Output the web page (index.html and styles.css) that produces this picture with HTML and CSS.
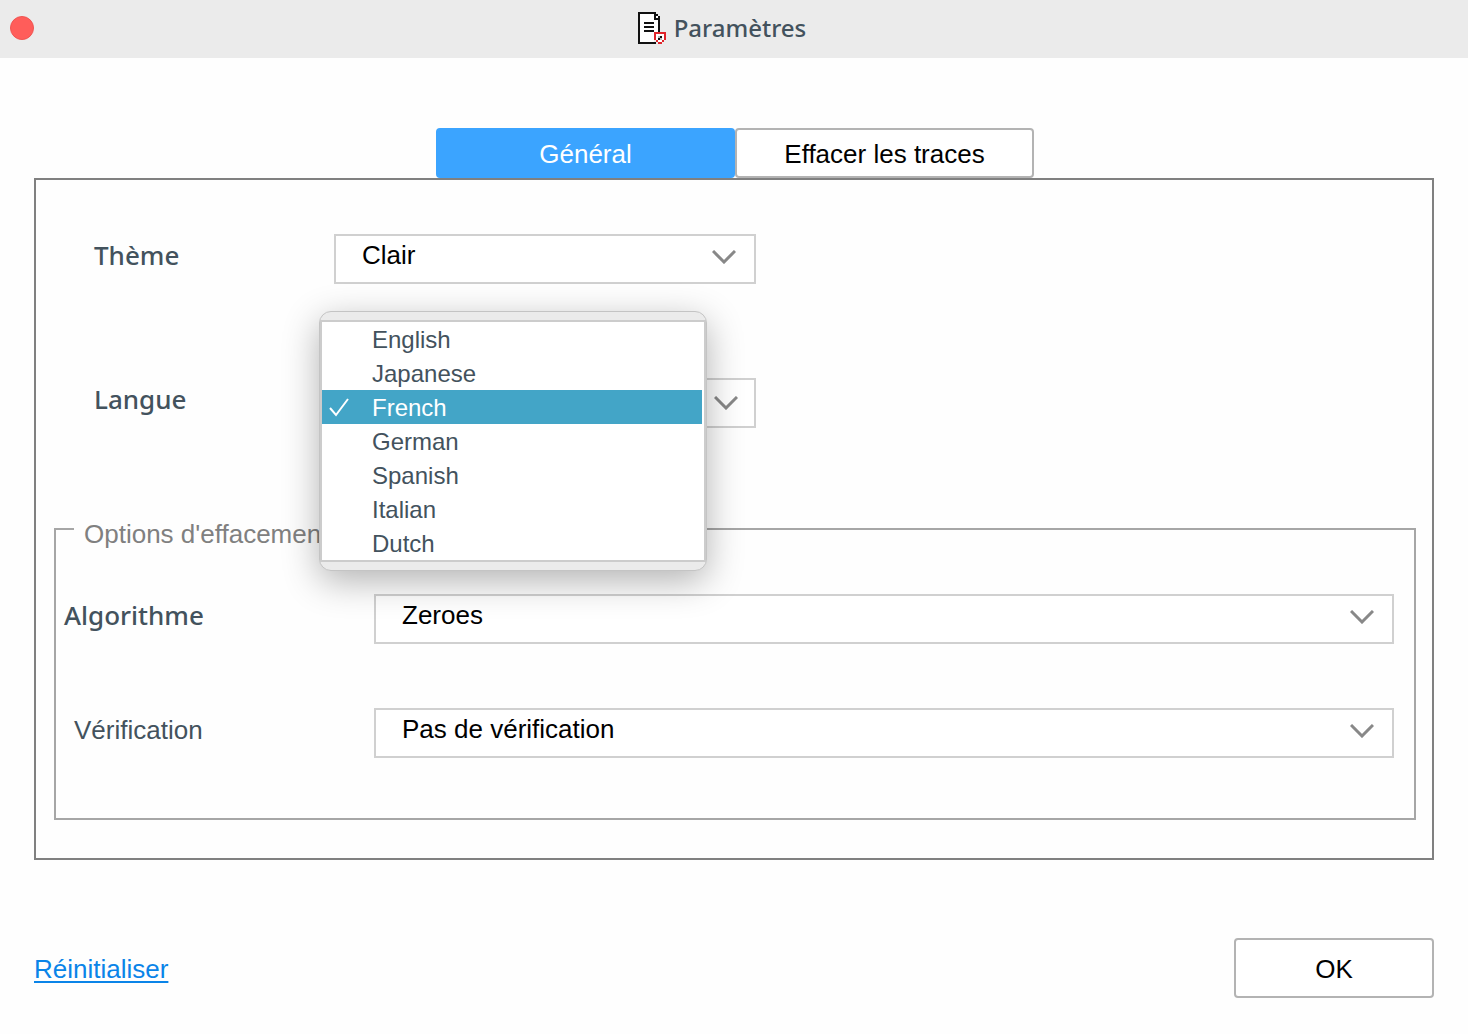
FILE: index.html
```html
<!DOCTYPE html>
<html lang="fr">
<head>
<meta charset="utf-8">
<meta name="viewport" content="width=device-width, initial-scale=1">
<title>Paramètres</title>
<link rel="stylesheet" href="styles.css">
</head>
<body>
<svg class="sprite" aria-hidden="true">
  <symbol id="chevron" viewBox="0 0 24 14">
    <path d="M1 1 12 12 23 1" fill="none" stroke="#888" stroke-width="3"/>
  </symbol>
</svg>
<header class="titlebar">
  <button class="close" type="button" aria-label="Fermer"></button>
  <h1 class="title">
    <svg class="doc-icon" viewBox="0 0 14 16" shape-rendering="crispEdges" aria-hidden="true">
      <path fill="#fff" d="M1 1h7v3h2v6H8v5H1z"/>
      <path fill="#111" d="M0 0h9v1H1v14h8v1H0zM8 1h2v1H9v1h2v7h-1V4H8zM10 2h1v1h-1zM3 5h5v1H3zM3 7h5v1H3zM3 9h5v1H3z"/>
      <path fill="#fff" d="M9 1h1v2H9zM9 11h4v3h-1v1h-2v-1H9z"/>
      <path fill="#111" d="M9 1h1v1H9z"/>
      <path fill="#e0242a" d="M8 10h6v1H8zM8 11h1v3H8zM13 11h1v3h-1zM9 14h1v1H9zM12 14h1v1h-1zM10 15h2v1h-2z"/>
      <path fill="#bbb" d="M10 12h1v1h-1zM11 13h1v1h-1z"/>
      <path fill="#111" d="M11 12h1v1h-1zM10 13h1v1h-1z"/>
    </svg>
    Paramètres
  </h1>
</header>
<main class="content">
  <div class="tabs" role="tablist">
    <button class="tab tab-active" type="button" role="tab" aria-selected="true">Général</button>
    <button class="tab" type="button" role="tab" aria-selected="false">Effacer les traces</button>
  </div>
  <section class="panel" role="tabpanel" aria-label="Général">
    <div class="row">
      <label class="label" for="theme">Thème</label>
      <div class="combo">
        <select id="theme"><option>Clair</option></select>
        <svg class="chevron" aria-hidden="true"><use href="#chevron"/></svg>
      </div>
    </div>
    <div class="row">
      <label class="label" for="language">Langue</label>
      <div class="combo">
        <select id="language"><option>French</option></select>
        <svg class="chevron chevron-open" aria-hidden="true"><use href="#chevron"/></svg>
        <div class="popup">
          <ul class="options" role="listbox" aria-label="Langue">
            <li class="option" role="option">English</li>
            <li class="option" role="option">Japanese</li>
            <li class="option option-selected" role="option" aria-selected="true">
              <svg class="check" viewBox="0 0 20 20" aria-hidden="true"><path d="M1 10 7 17 19 1" fill="none" stroke="#fff" stroke-width="2"/></svg>French</li>
            <li class="option" role="option">German</li>
            <li class="option" role="option">Spanish</li>
            <li class="option" role="option">Italian</li>
            <li class="option" role="option">Dutch</li>
          </ul>
        </div>
      </div>
    </div>
    <fieldset class="group">
      <legend>Options d'effacement</legend>
      <div class="row">
        <label class="label" for="algorithm">Algorithme</label>
        <div class="combo">
          <select id="algorithm"><option>Zeroes</option></select>
          <svg class="chevron" aria-hidden="true"><use href="#chevron"/></svg>
        </div>
      </div>
      <div class="row">
        <label class="label label-plain" for="verification">Vérification</label>
        <div class="combo">
          <select id="verification"><option>Pas de vérification</option></select>
          <svg class="chevron" aria-hidden="true"><use href="#chevron"/></svg>
        </div>
      </div>
    </fieldset>
  </section>
  <footer class="footer">
    <a class="reset" href="#">Réinitialiser</a>
    <button class="ok" type="button">OK</button>
  </footer>
</main>
</body>
</html>
```
FILE: styles.css
```css
* { box-sizing: border-box; }

body {
  margin: 0;
  background: #fefefe;
  color: #000;
  font: 26px/30px "Liberation Sans", Arial, sans-serif;
}

button, select { font: inherit; color: inherit; }

.sprite { display: none; }

.titlebar {
  display: grid;
  grid-template-columns: 1fr auto 1fr;
  align-items: center;
  height: 58px;
  padding: 0 10px 2px;
  background: #ebebeb;
}

.close {
  width: 24px;
  height: 24px;
  padding: 0;
  border: 1px solid #f05552;
  border-radius: 50%;
  background: #ff5d5a;
}

.title {
  display: flex;
  align-items: center;
  gap: 8px;
  margin: 0;
  padding-right: 24px;
  color: #43525d;
  font: 500 24px/30px "Noto Sans", sans-serif;
}

.doc-icon { width: 28px; height: 32px; }

.content { padding: 70px 34px 36px; }

.tabs {
  display: flex;
  justify-content: center;
  padding-left: 2px;
}

.tab {
  width: 299px;
  height: 50px;
  padding: 2px 0 0;
  border: 2px solid #b3b3b3;
  border-radius: 4px;
  background: #fff;
}

.tab-active {
  border-color: #3ba4ff;
  background: #3ba4ff;
  color: #fff;
}

.panel {
  display: flex;
  flex-direction: column;
  padding: 54px 16px 38px 18px;
  border: 2px solid #808080;
}

.row {
  display: grid;
  grid-template-columns: 240px 422px;
  padding-left: 40px;
}

.row + .row { margin-top: 94px; }

.label {
  padding-top: 6px;
  color: #43525d;
  font: 500 26px/30px "Noto Sans", sans-serif;
}

.label-plain {
  padding: 7px 0 0 10px;
  font: 26px/30px "Liberation Sans", Arial, sans-serif;
}

.combo { position: relative; display: grid; }

.combo > * { grid-area: 1 / 1; }

.combo select {
  appearance: none;
  width: 100%;
  height: 50px;
  padding: 0 60px 8px 26px;
  border: 2px solid #d0d0d0;
  border-radius: 0;
  background: #fff;
}

.chevron {
  width: 24px;
  height: 14px;
  margin: 16px 20px 0 0;
  justify-self: end;
  pointer-events: none;
}

.chevron-open { margin: 18px 18px 0 0; }

.popup {
  position: absolute;
  z-index: 1;
  top: -67px;
  left: -15px;
  width: 388px;
  padding: 8px 0;
  border: 1px solid #c4c4c4;
  border-radius: 12px;
  background: #ebebeb;
  box-shadow: 0 10px 36px rgba(0, 0, 0, .3);
}

.options {
  margin: 0;
  padding: 0 2px 0 0;
  border: 2px solid #ccc;
  background: #fff;
  list-style: none;
}

.option {
  display: flex;
  align-items: center;
  height: 34px;
  padding: 2px 0 0 50px;
  color: #43525d;
  font-size: 24px;
}

.option-selected {
  padding-left: 7px;
  gap: 23px;
  background: #43a5c7;
  color: #fff;
}

.check { width: 20px; height: 20px; }

.group {
  min-width: 0;
  margin: 81px 0 0;
  padding: 45px 20px 60px 18px;
  border: 2px solid #a6a6a6;
}

.group legend {
  padding: 10px 10px 0;
  color: #808080;
}

.group .row {
  grid-template-columns: 310px 1fr;
  margin-left: -10px;
  padding-left: 0;
}

.group .row + .row { margin-top: 64px; }

.footer {
  display: flex;
  align-items: center;
  justify-content: space-between;
  margin-top: 78px;
}

.reset {
  padding-top: 2px;
  color: #0a84e8;
  text-decoration-thickness: 2px;
  text-underline-offset: 3px;
}

.ok {
  width: 200px;
  height: 60px;
  padding: 2px 0 0;
  border: 2px solid #b3b3b3;
  border-radius: 4px;
  background: #fff;
}
```
